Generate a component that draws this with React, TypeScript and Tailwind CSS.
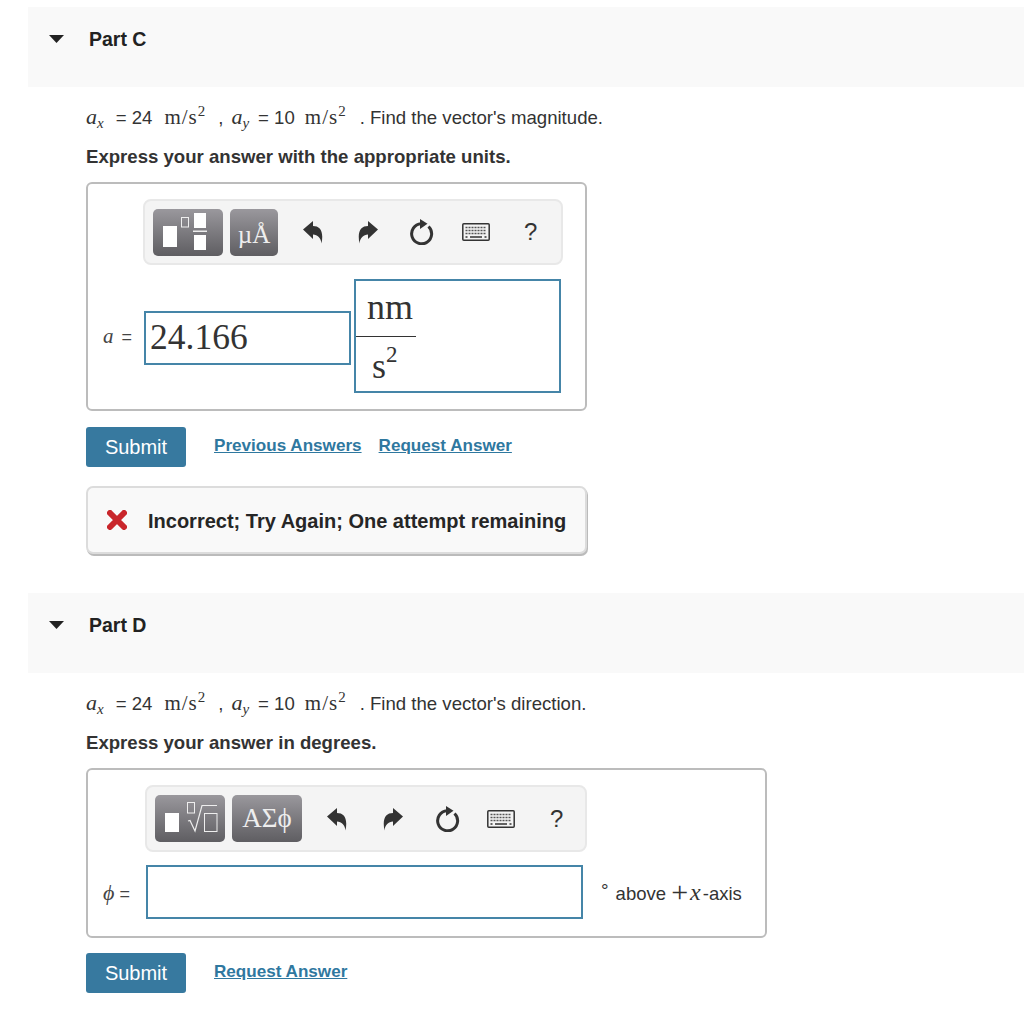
import { FC, ReactNode } from "react";

const serif = "font-['Liberation_Serif',serif]";

const UndoIcon: FC<{ flip?: boolean }> = ({ flip }) => (
    <svg width="20" height="24" viewBox="0 0 20 24" className={flip ? "-scale-x-100" : ""}>
        <path d="M0 9.5 L10 1 L10 6 C17 6 21 11 18.5 23.5 C18 18 14.5 14.5 10 14.5 L10 19 Z" fill="#333" />
    </svg>
);

const RefreshIcon = () => (
    <svg width="24" height="26" viewBox="0 0 24 26">
        <path d="M18.5 7.5 A10 10 0 1 1 11 4.8" fill="none" stroke="#333" strokeWidth="3" />
        <path d="M10 0 L17.5 4.8 L10 10 Z" fill="#333" />
    </svg>
);

const KeyboardIcon = () => (
    <svg width="28" height="18" viewBox="0 0 28 18">
        <rect x="0.8" y="0.8" width="26.4" height="16.4" rx="1" fill="#f4f4f4" stroke="#333" strokeWidth="1.5" />
        <path d="M3.5 4.5 H24.5 M3.5 7.5 H24.5 M3.5 10.5 H24.5" stroke="#555" strokeWidth="1.4" strokeDasharray="2 1" />
        <path d="M3.5 14 H5.5 M8 14 H20 M22.5 14 H24.5" stroke="#333" strokeWidth="1.5" />
    </svg>
);

const TemplateGlyph = () => (
    <svg width="70" height="47" viewBox="0 0 70 47">
        <rect x="10" y="17" width="14" height="21" fill="#fff" />
        <rect x="28.5" y="8.5" width="7" height="9.5" fill="none" stroke="#eee" strokeWidth="1" />
        <rect x="41" y="4" width="12" height="15" fill="#fff" />
        <rect x="40" y="21.5" width="14" height="1.5" fill="#eee" />
        <rect x="41" y="26" width="12" height="15" fill="#fff" />
    </svg>
);

const RadicalGlyph = () => (
    <svg width="70" height="47" viewBox="0 0 70 47">
        <rect x="10" y="18" width="14" height="19" fill="#fff" />
        <rect x="32.5" y="7.5" width="7" height="10.5" fill="none" stroke="#eee" strokeWidth="1" />
        <path d="M33 26 L35 25.5 L40 36 L47 10.5 H62" fill="none" stroke="#eee" strokeWidth="1.2" />
        <rect x="49.5" y="18.5" width="12.5" height="18" fill="none" stroke="#eee" strokeWidth="1" />
    </svg>
);

const ToolButton: FC<{ width: string; children: ReactNode }> = ({ width, children }) => (
    <div className={`${width} h-[47px] rounded-[5px] bg-gradient-to-b from-[#9a989d] to-[#5f5e62] flex items-center justify-center text-[#eee] ${serif}`}>
        {children}
    </div>
);

const MathUnit: FC<{ className: string }> = ({ className }) => (
    <span className={`${serif} text-[21px] tracking-[1px] ${className}`}>
        m/s<sup className="text-[15px] leading-none relative -top-[8px]">2</sup>
    </span>
);

const MathVar: FC<{ sub: string }> = ({ sub }) => (
    <span className={`${serif} italic text-[22px]`}>a<sub className="text-[15px] leading-none">{sub}</sub></span>
);

const Statement: FC<{ tail: string }> = ({ tail }) => (
    <p className="mt-[18px] ml-[86px] h-[24px] leading-[24px] text-[18.6px] text-[#333] whitespace-nowrap">
        <MathVar sub="x" />
        <span className="ml-[12px]">= 24</span>
        <MathUnit className="ml-[12px]" />
        <span className="ml-[12px]">,</span>
        <span className="ml-[8px]"><MathVar sub="y" /></span>
        <span className="ml-[9px]">= 10</span>
        <MathUnit className="ml-[10px]" />
        <span className="ml-[13px]">. {tail}</span>
    </p>
);

const PartHeader: FC<{ title: string }> = ({ title }) => (
    <div className="ml-[28px] h-[80px] bg-[#f9f9f9] flex items-start pt-[20px]">
        <svg width="15" height="8" viewBox="0 0 15 8" className="ml-[21px] mt-[8px]">
            <polygon points="0,0 15,0 7.5,8" fill="#222" />
        </svg>
        <span className="ml-[25px] text-[19.5px] leading-[24px] font-bold text-[#222]">{title}</span>
    </div>
);

const SubmitRow: FC<{ previous?: boolean; className: string }> = ({ previous, className }) => (
    <div className={`${className} ml-[86px] flex items-center h-[40px]`}>
        <button className="w-[100px] h-[40px] rounded-[3px] bg-[#37799f] text-white text-[20px]">Submit</button>
        {previous && <a className="ml-[28px] -mt-[3px] text-[17.1px] font-bold text-[#2f789f] underline">Previous Answers</a>}
        <a className={`${previous ? "ml-[17px]" : "ml-[28px]"} -mt-[3px] text-[17.1px] font-bold text-[#2f789f] underline`}>Request Answer</a>
    </div>
);

export default function App() {
    return (
        <div className="w-[1024px] h-[1011px] pt-[7px] bg-white font-['Liberation_Sans',sans-serif] overflow-hidden">
            <PartHeader title="Part C" />
            <Statement tail="Find the vector's magnitude." />
            <p className="mt-[16px] ml-[86px] h-[24px] leading-[24px] text-[18.6px] font-bold text-[#333]">Express your answer with the appropriate units.</p>

            <div className="mt-[13px] ml-[86px] w-[501px] h-[229px] border-2 border-[#bcbcbc] rounded-[6px] pt-[15px]">
                <div className="ml-[55px] w-[420px] h-[66px] border-2 border-[#e8e8e8] rounded-[8px] bg-[#f4f4f4] flex items-center pl-[8px]">
                    <ToolButton width="w-[70px]"><TemplateGlyph /></ToolButton>
                    <div className="ml-[7px]">
                        <ToolButton width="w-[48px]"><span className="text-[25px] mt-[5px]">µÅ</span></ToolButton>
                    </div>
                    <div className="ml-[25px] flex"><UndoIcon /></div>
                    <div className="ml-[35px] flex"><UndoIcon flip /></div>
                    <div className="ml-[32px] flex"><RefreshIcon /></div>
                    <div className="ml-[28px] flex"><KeyboardIcon /></div>
                    <span className="ml-[34px] text-[24px] text-[#333]">?</span>
                </div>
                <div className="mt-[14px] flex items-start">
                    <div className="w-[56px] mt-[45px] pl-[15px] text-[18px] leading-[24px] text-[#444] whitespace-nowrap">
                        <span className={`${serif} italic text-[21px] mr-[3px]`}>a</span> =
                    </div>
                    <div className={`mt-[32px] w-[207px] h-[54px] border-2 border-[#4585a8] pl-[4px] flex items-center ${serif} text-[35.5px] text-[#333]`}>24.166</div>
                    <div className={`ml-[3px] w-[207px] h-[114px] border-2 border-[#4585a8] ${serif} text-[#333] text-[36px]`}>
                        <div className="ml-[11px] h-[55px] leading-[52px]">nm</div>
                        <div className="h-[1px] w-[60px] bg-[#333]" />
                        <div className="ml-[16px] h-[55px] leading-[58px]">s<sup className="text-[23px] align-[5px] leading-none">2</sup></div>
                    </div>
                </div>
            </div>

            <SubmitRow previous className="mt-[16px]" />

            <div className="mt-[19px] ml-[86px] w-[501px] h-[68px] border-2 border-[#dcdcdc] rounded-[7px] bg-[#f9f9f9] shadow-[1px_2px_0_#bbb] flex items-center">
                <svg width="20" height="20" viewBox="0 0 20 20" className="ml-[19px]">
                    <path d="M3 3 L17 17 M17 3 L3 17" stroke="#c9262b" strokeWidth="6" strokeLinecap="round" />
                </svg>
                <span className="ml-[21px] mt-[1px] text-[20px] font-bold text-[#262626] whitespace-nowrap">Incorrect; Try Again; One attempt remaining</span>
            </div>

            <div className="mt-[39px]">
                <PartHeader title="Part D" />
            </div>
            <Statement tail="Find the vector's direction." />
            <p className="mt-[16px] ml-[86px] h-[24px] leading-[24px] text-[18.6px] font-bold text-[#333]">Express your answer in degrees.</p>

            <div className="mt-[13px] ml-[86px] w-[681px] h-[170px] border-2 border-[#bcbcbc] rounded-[6px] pt-[15px]">
                <div className="ml-[57px] w-[442px] h-[67px] border-2 border-[#e8e8e8] rounded-[8px] bg-[#f4f4f4] flex items-center pl-[8px]">
                    <ToolButton width="w-[70px]"><RadicalGlyph /></ToolButton>
                    <div className="ml-[7px]">
                        <ToolButton width="w-[70px]"><span className="text-[27px]">ΑΣϕ</span></ToolButton>
                    </div>
                    <div className="ml-[25px] flex"><UndoIcon /></div>
                    <div className="ml-[36px] flex"><UndoIcon flip /></div>
                    <div className="ml-[33px] flex"><RefreshIcon /></div>
                    <div className="ml-[27px] flex"><KeyboardIcon /></div>
                    <span className="ml-[35px] text-[24px] text-[#333]">?</span>
                </div>
                <div className="mt-[13px] flex items-center">
                    <div className="w-[58px] pl-[15px] text-[18px] text-[#444] whitespace-nowrap">
                        <span className={`${serif} italic text-[22px]`}>ϕ</span> =
                    </div>
                    <div className="w-[437px] h-[54px] border-2 border-[#4585a8]" />
                    <span className="ml-[18px] text-[19px] text-[#333] -mt-[2px]">°</span>
                    <span className="ml-[7px] mt-[1px] text-[18.5px] text-[#333] whitespace-nowrap">
                        above <span className={`${serif} text-[30px] leading-none align-[-2px]`}>+</span><i className={`${serif} text-[24px] leading-none mx-[2px]`}>x</i>-axis
                    </span>
                </div>
            </div>

            <SubmitRow className="mt-[15px]" />
        </div>
    );
}
